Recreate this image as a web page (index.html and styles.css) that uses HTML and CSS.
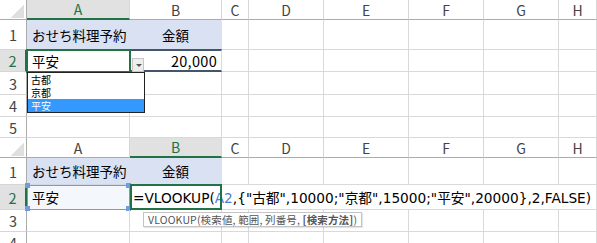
FILE: index.html
```html
<!DOCTYPE html>
<html lang="ja">
	<head>
		<meta charset="utf-8">
		<title>VLOOKUP 配列</title>
		<link rel="stylesheet" href="styles.css">
	</head>
	<body>
		<div class="sheet sheet-top">
			<div class="hd corner"></div>
			<div class="hd col sel-col">A</div>
			<div class="hd col">B</div>
			<div class="hd col">C</div>
			<div class="hd col">D</div>
			<div class="hd col">E</div>
			<div class="hd col">F</div>
			<div class="hd col">G</div>
			<div class="hd col">H</div>

			<div class="hd row">1</div>
			<div class="cell fill">おせち料理予約</div>
			<div class="cell fill center">金額</div>
			<div class="cell"></div><div class="cell"></div><div class="cell"></div><div class="cell"></div><div class="cell"></div><div class="cell"></div>

			<div class="hd row sel-row">2</div>
			<div class="cell active">平安</div>
			<div class="cell num banded">20,000</div>
			<div class="cell"></div><div class="cell"></div><div class="cell"></div><div class="cell"></div><div class="cell"></div><div class="cell"></div>

			<div class="hd row">3</div>
			<div class="cell"></div><div class="cell"></div><div class="cell"></div><div class="cell"></div><div class="cell"></div><div class="cell"></div><div class="cell"></div><div class="cell"></div>

			<div class="hd row">4</div>
			<div class="cell"></div><div class="cell"></div><div class="cell"></div><div class="cell"></div><div class="cell"></div><div class="cell"></div><div class="cell"></div><div class="cell"></div>

			<div class="hd row">5</div>
			<div class="cell"></div><div class="cell"></div><div class="cell"></div><div class="cell"></div><div class="cell"></div><div class="cell"></div><div class="cell"></div><div class="cell"></div>

			<!-- リストのドロップダウン -->
			<div class="dd-btn"><span class="dd-arrow"></span></div>
			<ul class="dd-list">
				<li>古都</li>
				<li>京都</li>
				<li class="picked">平安</li>
			</ul>
		</div>

		<div class="sheet sheet-bottom">
			<div class="hd corner"></div>
			<div class="hd col">A</div>
			<div class="hd col sel-col">B</div>
			<div class="hd col">C</div>
			<div class="hd col">D</div>
			<div class="hd col">E</div>
			<div class="hd col">F</div>
			<div class="hd col">G</div>
			<div class="hd col">H</div>

			<div class="hd row">1</div>
			<div class="cell fill">おせち料理予約</div>
			<div class="cell fill center">金額</div>
			<div class="cell"></div><div class="cell"></div><div class="cell"></div><div class="cell"></div><div class="cell"></div><div class="cell"></div>

			<div class="hd row sel-row">2</div>
			<div class="cell ref">平安<i class="h tl"></i><i class="h tr"></i><i class="h bl"></i><i class="h br"></i></div>
			<div class="cell formula"><span class="edit-box"></span><span class="ftext">=VLOOKUP(<span class="ref-txt">A2</span>,{"古都",10000;"京都",15000;"平安",20000},2,FALSE)</span></div>

			<div class="hd row">3</div>
			<div class="cell"></div><div class="cell"></div><div class="cell"></div><div class="cell"></div><div class="cell"></div><div class="cell"></div><div class="cell"></div><div class="cell"></div>

			<div class="hd row">4</div>
			<div class="cell"></div><div class="cell"></div><div class="cell"></div><div class="cell"></div><div class="cell"></div><div class="cell"></div><div class="cell"></div><div class="cell"></div>

			<div class="tip">VLOOKUP(検索値, 範囲, 列番号, <b>[検索方法]</b>)</div>
		</div>
	</body>
</html>
```

FILE: styles.css
```css
* {
	margin: 0;
	padding: 0;
	box-sizing: border-box;
}

body {
	width: 597px;
	height: 243px;
	overflow: hidden;
	background: #fff;
	font-family: "Noto Sans CJK JP", sans-serif;
	color: #000;
}

.sheet {
	position: relative;
	display: grid;
	grid-template-columns: 27px 103px 92px 27px 75px 85px 75px 75px 1fr;
}

.sheet-top {
	grid-template-rows: 20px 30px 22px 23px 22px 21px;
}

.sheet-bottom {
	grid-template-rows: 20px 27px 25px 22px 22px;
}

/* 見出し */
.hd {
	display: flex;
	align-items: center;
	justify-content: center;
	background: #fff;
	color: #444;
	font-size: 14px;
	border-right: 1px solid #d6d6d6;
	border-bottom: 1px solid #d6d6d6;
}

	.hd.col {
		border-bottom: 1px solid #ababab;
	}

	.hd.row {
		border-right: 1px solid #ababab;
		font-size: 14.5px;
	}

	.hd.corner {
		border-right: 1px solid #ababab;
		border-bottom: 1px solid #ababab;
		background: linear-gradient(135deg, transparent 50%, #dfdfdf 50%) no-repeat;
		background-size: 14px 13px;
		background-position: 10px 5px;
	}

	.sel-col {
		background: #e1e1e1;
		color: #217346;
		border-bottom: 2px solid #217346 !important;
	}

	.sel-row {
		background: #e1e1e1;
		color: #217346;
		border-right: 2px solid #217346 !important;
	}

/* セル */
.cell {
	position: relative;
	display: flex;
	align-items: center;
	padding: 0 5px;
	font-size: 13.5px;
	white-space: nowrap;
	border-right: 1px solid #d9d9d9;
	border-bottom: 1px solid #d9d9d9;
}

	.cell.fill {
		background: #d9e1f2;
		border-right-color: #d9e1f2;
		border-bottom-color: #d0d7e5;
	}

	.cell.center {
		justify-content: center;
	}

	.cell.num {
		justify-content: flex-end;
		font-size: 14.5px;
		padding-right: 4px;
		letter-spacing: 0.3px;
	}

	.cell.banded {
		border-top: 2px solid #44546a;
		border-bottom: 2px solid #44546a;
		margin-top: -1px;
	}

	.cell.active {
		outline: 2px solid #217346;
		outline-offset: -1px;
		z-index: 2;
	}

	.cell.ref {
		background: #f4f7fc;
		outline: 1px solid #6f9be0;
		outline-offset: -1px;
	}

		.h {
			position: absolute;
			width: 5px;
			height: 5px;
			background: #6f9be0;
		}

		.h.tl { left: -2px; top: -2px; }
		.h.tr { right: -2px; top: -2px; }
		.h.bl { left: -2px; bottom: -2px; }
		.h.br { right: -2px; bottom: -2px; }

	.cell.formula {
		grid-column: 3 / -1;
		background: #fff;
		padding-left: 3px;
		z-index: 1;
	}

		.ftext {
			font-family: "DejaVu Sans", "Noto Sans CJK JP", sans-serif;
			font-size: 13.7px;
		}

		.edit-box {
			position: absolute;
			left: 0;
			top: -1px;
			width: 92px;
			height: 26px;
			border: 2px solid #217346;
			pointer-events: none;
		}

		.ref-txt {
			color: #4a7fd6;
		}

/* ドロップダウン */
.dd-btn {
	position: absolute;
	left: 132px;
	top: 58px;
	width: 12px;
	height: 14px;
	background: #eeeeee;
	border: 1px solid #c6c6c6;
	z-index: 3;
}

	.dd-arrow {
		position: absolute;
		left: 3px;
		top: 5px;
		border-left: 3px solid transparent;
		border-right: 3px solid transparent;
		border-top: 3px solid #555;
	}

.dd-list {
	position: absolute;
	left: 27px;
	top: 72px;
	width: 118px;
	list-style: none;
	background: #fff;
	border: 1px solid #222;
	z-index: 4;
	font-size: 10px;
}

	.dd-list li {
		height: 13px;
		line-height: 13px;
		padding-left: 3px;
		overflow: hidden;
	}

	.dd-list .picked {
		background: #3399ff;
		color: #fff;
	}

/* 関数のヒント */
.tip {
	position: absolute;
	left: 143px;
	top: 74px;
	height: 15px;
	padding: 0 4px;
	background: #fff;
	border: 1px solid #c4c4c4;
	color: #555;
	font-size: 10.5px;
	line-height: 13px;
	letter-spacing: 0.15px;
	white-space: nowrap;
	z-index: 5;
	box-shadow: 1px 1px 1px rgba(0, 0, 0, 0.1);
}

	.tip b {
		font-weight: bold;
	}
```
